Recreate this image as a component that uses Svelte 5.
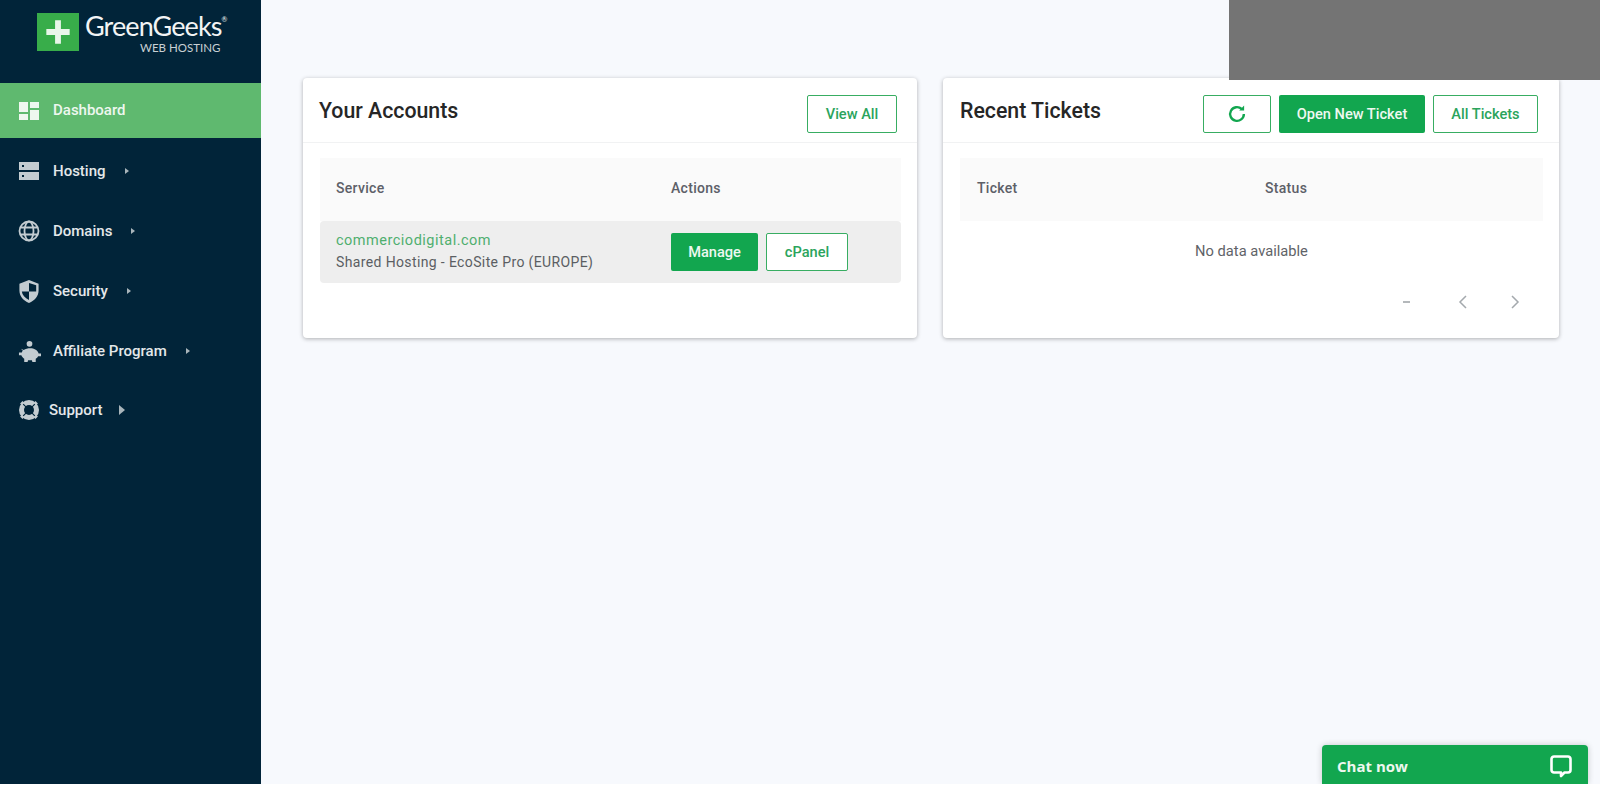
<script>
  const navItems = [
    { label: 'Hosting', icon: 'server' },
    { label: 'Domains', icon: 'globe' },
    { label: 'Security', icon: 'shield' },
    { label: 'Affiliate Program', icon: 'piggy' },
    { label: 'Support', icon: 'support' }
  ];
</script>

<div class="page">
  <aside class="sidebar">
    <div class="logo">
      <div class="logo-mark">
        <svg viewBox="0 0 24 24" width="28" height="28"><path d="M9.500 2h5v7.500h7.500v5h-7.500v7.500h-5v-7.500h-7.500v-5h7.500z" fill="#e9f6ea" /></svg>
      </div>
      <div class="logo-text">
        <div class="logo-name">GreenGeeks<sup>®</sup></div>
        <div class="logo-sub">WEB HOSTING</div>
      </div>
    </div>

    <div class="nav-item active">
      <svg class="nav-icon" viewBox="0 0 20 20" width="20" height="20">
        <path d="M0 1h9v10h-9zM11 1h9v6h-9zM0 13h9v6h-9zM11 9h9v10h-9z" fill="#eef7ef" />
      </svg>
      <span>Dashboard</span>
    </div>

    <nav>
      {#each navItems as item}
        <div class="nav-item {item.icon}">
          {#if item.icon === 'server'}
            <svg class="nav-icon" viewBox="0 0 20 20" width="20" height="20">
              <path fill-rule="evenodd" d="M0 1h20v8h-20zM3 4v2h2v-2zM0 11h20v8h-20zM3 14v2h2v-2z" fill="#c3ccd1" />
            </svg>
          {:else if item.icon === 'globe'}
            <svg class="nav-icon" viewBox="0 0 22 22" width="22" height="22" fill="none" stroke="#c3ccd1" stroke-width="1.800">
              <circle cx="11" cy="11" r="9.500" />
              <ellipse cx="11" cy="11" rx="4.500" ry="9.500" />
              <path d="M2 7.500h18M2 14.500h18" />
            </svg>
          {:else if item.icon === 'shield'}
            <svg class="nav-icon" viewBox="0 0 20 24" width="20" height="23">
              <path fill-rule="evenodd" d="M10 0l10 4v7c0 6-4 10.500-10 13c-6-2.500-10-7-10-13v-7zM10 3v9h-7.500c.4 3.800 3.200 6.800 7.500 8.800v-8.800h7.500v-6.500z" fill="#c3ccd1" />
            </svg>
          {:else if item.icon === 'piggy'}
            <svg class="nav-icon" viewBox="0 0 24 24" width="23" height="23">
              <circle cx="12" cy="4" r="3" fill="#c3ccd1" />
              <path d="M3 9l3 1.500c3-2 9-2.500 12-.5c2 1 3 2.500 3.500 4h2.500v3h-3c-.5 1-1.500 2-2.500 2.500v3.500h-3.500l-.5-2h-4l-.5 2h-3.500v-3.500c-1.500-1-2.500-2-3-3.500h-2.500v-3h3c.3-1 .6-1.500 1-2z" fill="#c3ccd1" />
            </svg>
          {:else}
            <svg class="nav-icon" viewBox="0 0 22 22" width="22" height="22" fill="none">
              <circle cx="11" cy="11" r="7.500" stroke="#c3ccd1" stroke-width="5" />
              <path d="M5.200 5.200l3 3M16.800 5.200l-3 3M5.200 16.800l3-3M16.800 16.800l-3-3" stroke="#012439" stroke-width="1.200" />
              <path d="M5.200 2.800l-2.400 2.400M19.200 5.200l-2.400-2.400M2.800 16.800l2.400 2.400M16.800 19.200l2.400-2.400" stroke="#c3ccd1" stroke-width="2" />
            </svg>
          {/if}
          <span>{item.label}</span>
          <i class="caret"></i>
        </div>
      {/each}
    </nav>
  </aside>

  <main class="content">
    <section class="card">
      <header class="card-head">
        <h2>Your Accounts</h2>
        <div class="head-actions">
          <button class="btn outline view-all">View All</button>
        </div>
      </header>
      <div class="table">
        <div class="thead accounts-grid">
          <div>Service</div>
          <div>Actions</div>
        </div>
        <div class="account-row accounts-grid">
          <div class="service">
            <div class="domain">commerciodigital.com</div>
            <div class="plan">Shared Hosting - EcoSite Pro (EUROPE)</div>
          </div>
          <div class="row-actions">
            <button class="btn solid manage">Manage</button>
            <button class="btn outline cpanel">cPanel</button>
          </div>
        </div>
      </div>
    </section>

    <section class="card">
      <header class="card-head">
        <h2>Recent Tickets</h2>
        <div class="head-actions">
          <button class="btn outline refresh" aria-label="Refresh">
            <svg viewBox="0 0 24 24" width="22" height="22" fill="none" stroke="#12a64f" stroke-width="2.600">
              <path d="M19.500 12a7.500 7.500 0 1 1-2.400-5.500" />
              <path d="M19.800 2.800v5.400h-5.400z" fill="#12a64f" stroke="none" />
            </svg>
          </button>
          <button class="btn solid open-ticket">Open New Ticket</button>
          <button class="btn outline all-tickets">All Tickets</button>
        </div>
      </header>
      <div class="table">
        <div class="thead tickets-grid">
          <div>Ticket</div>
          <div>Status</div>
        </div>
        <div class="empty">No data available</div>
        <div class="pager">
          <span class="dash"></span>
          <svg viewBox="0 0 10 16" width="10" height="16" fill="none" stroke="#a4a9ad" stroke-width="1.500"><path d="M8 2l-6 6l6 6" /></svg>
          <svg viewBox="0 0 10 16" width="10" height="16" fill="none" stroke="#a4a9ad" stroke-width="1.500"><path d="M2 2l6 6l-6 6" /></svg>
        </div>
      </div>
    </section>
  </main>

  <div class="grey-block"></div>

  <div class="chat">
    <span>Chat now</span>
    <svg viewBox="0 0 24 24" width="24" height="24" fill="none" stroke="#fff" stroke-width="2.600" stroke-linejoin="round">
      <path d="M5 2.500h14a2.500 2.500 0 0 1 2.500 2.500v11a2.500 2.500 0 0 1-2.500 2.500h-3.500l-3.500 3.500v-3.500h-7a2.500 2.500 0 0 1-2.500-2.500v-11a2.500 2.500 0 0 1 2.500-2.500z" />
    </svg>
  </div>
</div>

<style>
  :global(body) {
    margin: 0;
    background: #fff;
    font-family: Roboto, "Liberation Sans", sans-serif;
  }

  .page {
    position: relative;
    display: flex;
    width: 1600px;
    height: 784px;
    background: #f7f9fd;
    overflow: hidden;
  }

  .sidebar {
    flex: 0 0 261px;
    background: #012439;
    color: #e8ecee;
  }

  .logo {
    display: flex;
    height: 83px;
    box-sizing: border-box;
    padding: 13px 0 0 37px;
    gap: 6px;
  }

  .logo-mark {
    display: flex;
    align-items: center;
    justify-content: center;
    width: 42px;
    height: 38px;
    background: #38ad4a;
  }

  .logo-name {
    font-family: Lato, sans-serif;
    font-size: 27px;
    line-height: 26px;
    letter-spacing: -0.900px;
    color: #f2f4f5;
    white-space: nowrap;
  }

  .logo-name sup {
    font-size: 7px;
    letter-spacing: 0;
    vertical-align: 14px;
    line-height: 0;
  }

  .logo-sub {
    font-family: Lato, sans-serif;
    font-size: 11.500px;
    line-height: 12px;
    margin-top: 3px;
    color: #c8d0d4;
    text-align: right;
    padding-right: 7px;
  }

  .nav-item {
    display: flex;
    align-items: center;
    height: 60px;
    padding-left: 19px;
    font-size: 15px;
    font-weight: 500;
    color: #e4e8ea;
  }

  .nav-item .nav-icon {
    flex: 0 0 auto;
    margin-right: 14px;
  }

  .nav-item.active {
    height: 55px;
    background: #5fb96f;
    color: #eef7ef;
    margin-bottom: 3px;
  }

  .nav-item.active span {
    margin-bottom: 2px;
  }

  .caret {
    width: 0;
    height: 0;
    margin-left: 19px;
    border-left: 4px solid #a9b5bb;
    border-top: 3.500px solid transparent;
    border-bottom: 3.500px solid transparent;
  }

  .globe .nav-icon {
    margin-right: 13px;
    margin-left: -1px;
  }

  .piggy .nav-icon {
    margin-right: 12px;
    margin-left: -1px;
  }

  .support {
    height: 58px;
  }

  .support .nav-icon {
    margin-left: -1px;
    margin-right: 9px;
  }

  .support .caret {
    margin-left: 17px;
    border-left-width: 6px;
    border-top-width: 5px;
    border-bottom-width: 5px;
  }

  .content {
    flex: 1;
    display: flex;
    align-items: flex-start;
    gap: 26px;
    padding: 78px 41px 0 42px;
  }

  .card {
    flex: 0 0 auto;
    box-sizing: border-box;
    height: 260px;
    background: #fff;
    border-radius: 4px;
    box-shadow: 0 1px 4px rgba(0, 0, 0, 0.3);
  }

  .card:first-child {
    width: 614px;
  }

  .card:last-child {
    width: 616px;
  }

  .card-head {
    display: flex;
    justify-content: space-between;
    height: 65px;
    padding: 18px 20px 0 16px;
    box-sizing: border-box;
    border-bottom: 1px solid #f1f2f3;
  }

  .card:last-child .card-head {
    padding-right: 21px;
  }

  h2 {
    margin: 1px 0 0;
    font-size: 21.300px;
    font-weight: 500;
    line-height: 28px;
    color: #262626;
  }

  .card:last-child h2 {
    margin-left: 1px;
  }

  .head-actions {
    display: flex;
    gap: 8px;
    margin-top: -1px;
  }

  .btn {
    box-sizing: border-box;
    height: 38px;
    padding: 0 0 1px;
    border-radius: 2px;
    font-family: Roboto, sans-serif;
    font-size: 14.600px;
    font-weight: 500;
    cursor: pointer;
  }

  .solid {
    border: 0;
    background: #12a64f;
    color: #eef8f0;
  }

  .outline {
    border: 1px solid #38ad62;
    background: #fff;
    color: #2ba45c;
  }

  .view-all { width: 90px; }
  .manage { width: 87px; }
  .cpanel { width: 82px; }
  .refresh { width: 68px; display: flex; align-items: center; justify-content: center; }
  .open-ticket { width: 146px; }
  .all-tickets { width: 105px; }

  .table {
    margin: 15px 16px 0 17px;
    font-size: 14px;
  }

  .thead {
    height: 63px;
    box-sizing: border-box;
    padding-bottom: 4px;
    align-items: center;
    background: #fafafa;
    color: #5d6068;
    font-weight: 500;
    letter-spacing: 0.300px;
  }

  .accounts-grid {
    display: grid;
    grid-template-columns: 335px 1fr;
    padding-left: 16px;
  }

  .tickets-grid {
    display: grid;
    grid-template-columns: 288px 1fr;
    padding-left: 17px;
  }

  .account-row {
    height: 62px;
    align-items: center;
    background: #eeeeee;
    border-radius: 4px;
    letter-spacing: 0.370px;
  }

  .domain {
    color: #4fae6f;
    line-height: 21px;
    font-size: 14.500px;
    letter-spacing: 0.500px;
    margin-top: -1px;
    margin-bottom: 1px;
  }

  .plan {
    color: #5b5e63;
    line-height: 21px;
  }

  .row-actions {
    display: flex;
    gap: 8px;
    letter-spacing: 0;
  }

  .empty {
    padding-top: 20px;
    height: 29px;
    line-height: 20px;
    text-align: center;
    font-size: 14.700px;
    color: #5f6368;
  }

  .pager {
    display: flex;
    align-items: center;
    justify-content: flex-end;
    margin-top: 24px;
    padding-right: 23px;
    gap: 42px;
  }

  .dash {
    width: 7px;
    height: 2px;
    margin-right: 6px;
    background: #b4b8bb;
  }

  .grey-block {
    position: absolute;
    top: 0;
    right: 0;
    width: 371px;
    height: 80px;
    background: #747474;
  }

  .chat {
    position: absolute;
    right: 12px;
    bottom: 0;
    display: flex;
    align-items: center;
    justify-content: space-between;
    box-sizing: border-box;
    width: 266px;
    height: 39px;
    padding: 3px 15px 0;
    background: #12a64f;
    border-radius: 4px 4px 0 0;
    box-shadow: 0 0 6px rgba(0, 0, 0, 0.2);
    color: #eef8f0;
    font-family: "Open Sans", sans-serif;
    font-size: 15px;
    font-weight: 700;
  }
</style>
